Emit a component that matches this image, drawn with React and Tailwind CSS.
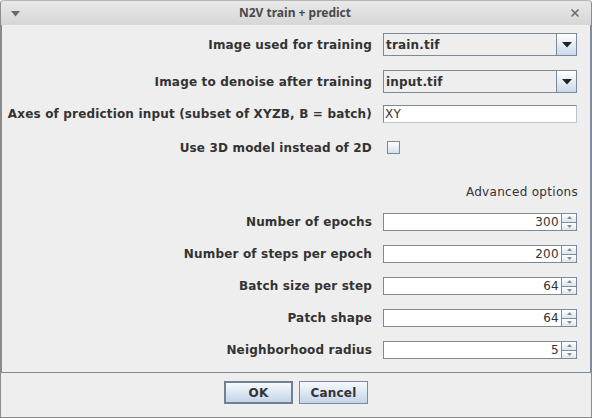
import React from "react";

const label = "font-['DejaVu_Sans',sans-serif] font-bold text-[12px] tracking-[0.17px] text-[#333333]";
const plain = "font-['DejaVu_Sans',sans-serif] text-[12px] tracking-[0.3px] text-[#333333]";

const Combo = ({ value }) => (
  <div className="flex h-[23px] w-[194px] border border-[#7a8a99] bg-[#eeeeee]">
    <div className={`flex flex-1 items-center pl-[2px] ${label}`}>{value}</div>
    <div className="flex w-[20px] items-center justify-center border-l border-[#7a8a99] bg-gradient-to-b from-[#ffffff] to-[#c9d9ea]">
      <svg width="10" height="6" viewBox="0 0 10 6">
        <path d="M0 0 H10 L5 5.5 Z" fill="#222222" />
      </svg>
    </div>
  </div>
);

const Spinner = ({ value }) => (
  <div className="flex h-[18px] w-[194px]">
    <div className={`flex flex-1 items-center justify-end border border-[#7a8a99] border-r-0 bg-white pr-[2px] ${plain}`}>
      {value}
    </div>
    <div className="flex w-[16px] flex-col border border-[#7a8a99]">
      <div className="flex flex-1 items-center justify-center border-b border-[#7a8a99] bg-gradient-to-b from-[#ffffff] to-[#dbe6f1]">
        <svg width="5" height="3" viewBox="0 0 5 3">
          <path d="M0 3 L2.5 0 L5 3 Z" fill="#8a8a8a" />
        </svg>
      </div>
      <div className="flex flex-1 items-center justify-center bg-gradient-to-b from-[#ffffff] to-[#dbe6f1]">
        <svg width="5" height="3" viewBox="0 0 5 3">
          <path d="M0 0 L5 0 L2.5 3 Z" fill="#8a8a8a" />
        </svg>
      </div>
    </div>
  </div>
);

const Row = ({ text, mt, h, children }) => (
  <div className={`flex items-center ${mt} ${h}`}>
    <div className={`w-[370px] whitespace-nowrap text-right ${label}`}>{text}</div>
    <div className="ml-[11px]">{children}</div>
  </div>
);

export default function App() {
  return (
    <div className="flex h-[418px] w-[592px] flex-col overflow-hidden rounded-t-[4px] border border-t-0 border-[#8c8c8c] bg-[#eeeeee]">
      {/* Title bar */}
      <div className="flex h-[25px] items-center rounded-t-[4px] border-t border-[#b5b5b5] bg-gradient-to-b from-[#e9e9e9] to-[#d6d6d6] px-[10px]">
        <svg width="9" height="6" viewBox="0 0 9 6" className="mt-[1px]">
          <path d="M0 0 H9 L4.5 5.5 Z" fill="#6a6a6a" />
        </svg>
        <div className="flex-1 text-center font-['Noto_Sans',sans-serif] text-[12px] font-bold text-[#4a4a4a]">
          N2V train + predict
        </div>
        <svg width="10" height="10" viewBox="0 0 10 10" className="mr-[1px]">
          <path d="M1.5 1.5 L8.5 8.5 M8.5 1.5 L1.5 8.5" stroke="#6a6a6a" strokeWidth="1.6" />
        </svg>
      </div>

      {/* Form panel */}
      <div className="flex flex-1 flex-col border border-t-0 border-[#7a8a99]">
        <Row text="Image used for training" mt="mt-[8px]" h="h-[23px]">
          <Combo value="train.tif" />
        </Row>
        <Row text="Image to denoise after training" mt="mt-[14px]" h="h-[23px]">
          <Combo value="input.tif" />
        </Row>
        <Row text="Axes of prediction input (subset of XYZB, B = batch)" mt="mt-[12px]" h="h-[18px]">
          <div className={`flex h-[18px] w-[194px] items-center border border-[#7a8a99] border-b-[#b8c4cf] border-r-[#b8c4cf] bg-white pl-[1px] ${plain}`}>
            XY
          </div>
        </Row>
        <Row text="Use 3D model instead of 2D" mt="mt-[18px]" h="h-[13px]">
          <div className="ml-[4px] h-[13px] w-[13px] border border-[#7a8a99] bg-gradient-to-b from-[#ffffff] to-[#d3e0ec]" />
        </Row>

        <div className={`mt-[31px] flex h-[14px] items-center justify-end pr-[12px] ${plain}`}>
          Advanced options
        </div>

        <Row text="Number of epochs" mt="mt-[14px]" h="h-[18px]">
          <Spinner value="300" />
        </Row>
        <Row text="Number of steps per epoch" mt="mt-[14px]" h="h-[18px]">
          <Spinner value="200" />
        </Row>
        <Row text="Batch size per step" mt="mt-[14px]" h="h-[18px]">
          <Spinner value="64" />
        </Row>
        <Row text="Patch shape" mt="mt-[14px]" h="h-[18px]">
          <Spinner value="64" />
        </Row>
        <Row text="Neighborhood radius" mt="mt-[14px]" h="h-[18px]">
          <Spinner value="5" />
        </Row>
      </div>

      {/* Buttons */}
      <div className="flex h-[44px] justify-center gap-[6px] pt-[8px]">
        <button className={`h-[23px] w-[69px] border-2 border-[#6f8192] bg-gradient-to-b from-[#f6f9fc] to-[#c3d5e8] ${label}`}>
          OK
        </button>
        <button className={`h-[23px] w-[69px] border border-[#7a8a99] bg-gradient-to-b from-[#f6f9fc] to-[#c3d5e8] ${label}`}>
          Cancel
        </button>
      </div>
    </div>
  );
}
